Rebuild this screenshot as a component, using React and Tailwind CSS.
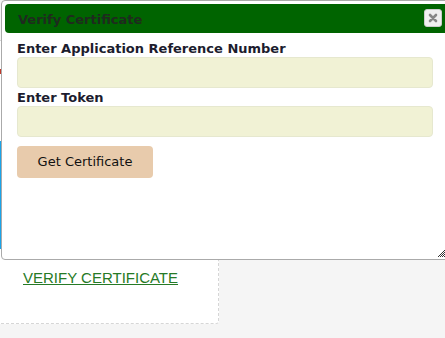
import React from "react";

export default function App() {
  return (
    <div className="relative h-[338px] w-[445px] overflow-hidden bg-[#f5f5f5] font-['DejaVu_Sans',Verdana,sans-serif]">
      {/* page card behind the dialog */}
      <div className="ml-[-2px] mt-[40px] h-[284px] w-[221px] rounded-br-[3px] border border-dashed border-[#d6d6d6] bg-white">
        <div className="flex">
          <div className="mt-[28px] h-[5px] w-[3px] bg-[#c0392b]" />
        </div>
        <div className="mt-[67px] h-[108px] w-[4px] bg-[#1aa3e8]" />
        <div className="mt-[17px] pl-[24px]">
          <a
            href="#"
            className="font-['Liberation_Sans',Arial,sans-serif] text-[15px] text-[#267a26] underline"
          >
            VERIFY CERTIFICATE
          </a>
        </div>
      </div>

      {/* dialog */}
      <div className="absolute left-[1px] top-0 h-[260px] w-[470px] rounded-[4px] border border-[#aaaaaa] bg-white p-[3px]">
        <div className="relative flex h-[29px] items-center rounded-[4px] bg-[#006400] pl-[13px] pt-[2px]">
          <span className="text-[13px] font-bold text-[#1f2a1f]">Verify Certificate</span>
          <button className="absolute left-[419px] top-[5px] flex h-[18px] w-[18px] items-center justify-center rounded-[3px] border border-[#cccccc] bg-[#f0f0f0]">
            <svg width="10" height="10" viewBox="0 0 10 10">
              <path d="M2 2 L8 8 M8 2 L2 8" stroke="#888" strokeWidth="2.6" strokeLinecap="round" />
            </svg>
          </button>
        </div>
        <div className="flex flex-col pl-[12px] pt-[8px]">
          <label className="text-[13px] font-bold leading-[16px] text-[#1c1c2e]">
            Enter Application Reference Number
          </label>
          <input className="h-[31px] w-[416px] rounded-[4px] border border-[#e6e8cf] bg-[#f1f2d5] outline-none" />
          <label className="mt-[2px] text-[13px] font-bold leading-[16px] text-[#1c1c2e]">
            Enter Token
          </label>
          <input className="h-[31px] w-[416px] rounded-[4px] border border-[#e6e8cf] bg-[#f1f2d5] outline-none" />
          <div className="mt-[9px]">
            <button className="h-[32px] w-[136px] rounded-[4px] bg-[#e8cbac] text-[13px] text-[#111]">
              Get Certificate
            </button>
          </div>
        </div>
        <svg className="absolute left-[436px] top-[249px]" width="7" height="7" viewBox="0 0 7 7">
          <path d="M7 0 L0 7 M7 2 L2 7 M7 4 L4 7 M7 6 L6 7" stroke="#333" strokeWidth="1" />
        </svg>
      </div>
    </div>
  );
}
